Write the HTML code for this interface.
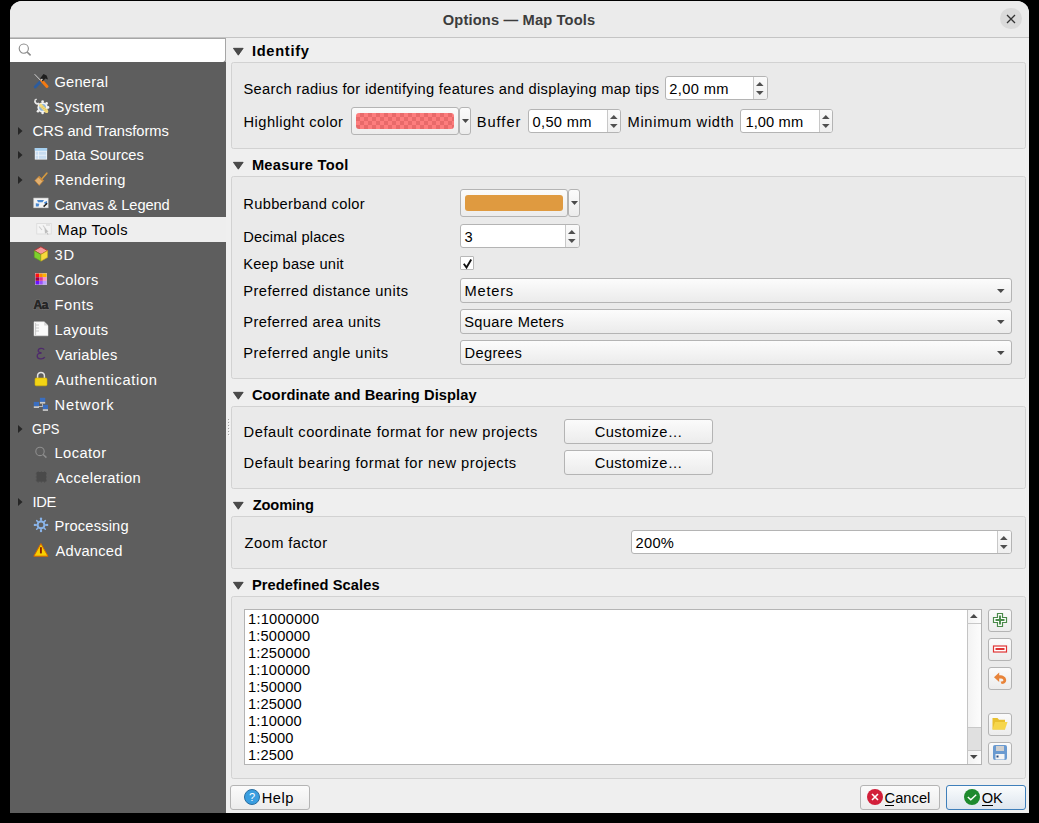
<!DOCTYPE html>
<html><head><meta charset="utf-8"><style>
*{box-sizing:border-box;margin:0;padding:0}
html,body{width:1039px;height:823px;background:#000;overflow:hidden;font-family:"Liberation Sans", sans-serif;font-size:14.67px;color:#000}
.a{position:absolute}
.t{position:absolute;white-space:pre;line-height:18px}
.win{position:absolute;left:10px;top:1px;width:1019px;height:812px;background:#efefef;border-radius:12px 12px 0 0;overflow:hidden}
.grp{position:absolute;background:#eaeaea;border:1px solid #d2d2d2;border-radius:2.5px}
.inp{position:absolute;background:#fff;border:1px solid #b4b4b4;border-radius:3px}
.btn{position:absolute;border:1px solid #b4b4b4;border-radius:3px;background:linear-gradient(#fbfbfb,#ececec)}
.combo{position:absolute;border:1px solid #b4b4b4;border-radius:3px;background:linear-gradient(#fcfcfc,#ebebeb)}
svg{position:absolute;overflow:visible}
</style></head>
<body>
<div class="win"></div>
<div class="a" style="left:10px;top:1px;width:1019px;height:36px;background:#ebebeb;border-radius:12px 12px 0 0"></div>
<div class="a" style="left:10px;top:37px;width:1019px;height:1px;background:#c4c4c4"></div>
<div class="a" style="left:1000.3px;top:8px;width:21.4px;height:21.4px;border-radius:50%;background:#dadada"></div>
<svg style="left:1007px;top:14.7px" width="8" height="8" viewBox="0 0 8 8"><path d="M0 0L8 8M8 0L0 8" stroke="#333" stroke-width="1.3"/></svg>
<div class="a" style="left:10px;top:38px;width:216px;height:775px;background:#5e5e5e"></div>
<div class="a" style="left:10px;top:38px;width:216px;height:1px;background:#a6a6a6"></div>
<div class="a" style="left:225px;top:39px;width:1px;height:23px;background:#a6a6a6"></div>
<div class="a" style="left:10px;top:39px;width:215px;height:23px;background:#fff;border-radius:0 0 2px 0"></div>
<svg style="left:18px;top:43px" width="14" height="14" viewBox="0 0 14 14"><circle cx="5.8" cy="5.6" r="4.6" fill="none" stroke="#8a8a8a" stroke-width="1.1"/><path d="M9.2 9.1L12.6 12.4" stroke="#8a8a8a" stroke-width="1.5"/></svg>
<svg style="left:33px;top:73px" width="16" height="16" viewBox="0 0 16 16"><path d="M1.6 1.2L7.6 7.4" stroke="#dcdcdc" stroke-width="0.9"/>
<path d="M2.2 14L6.8 9.3" stroke="#2c5c9e" stroke-width="2.8" stroke-linecap="round"/>
<path d="M8.6 7.6L14 13.4" stroke="#f37a12" stroke-width="3" stroke-linecap="round"/>
<path d="M7.2 5.2L10.5 1L13.6 2.6L15 6.6L12.4 5.6L9.6 8.6Z" fill="#1e1e1e"/><path d="M7.5 7L9 5.6L9.8 6.4L8.4 7.8Z" fill="#e0e0e0"/></svg>
<svg style="left:33px;top:98px" width="16" height="16" viewBox="0 0 16 16"><g fill="#f2f2f2"><circle cx="9.6" cy="9.4" r="5.2"/><circle cx="9.6" cy="3.6" r="1.3"/><circle cx="15" cy="9.4" r="1.3"/><circle cx="9.6" cy="15" r="1.3"/><circle cx="5" cy="13.2" r="1.3"/><circle cx="13.6" cy="5.4" r="1.3"/><circle cx="13.6" cy="13.4" r="1.3"/></g>
<circle cx="9.6" cy="9.4" r="3.4" fill="#86b2e0"/>
<path d="M2 2.8A2.4 2.4 0 0 0 5.2 5.6L8 8.4" stroke="#eaeaea" stroke-width="1.8" fill="none"/><path d="M1.6 2.6L3.6 1" stroke="#eaeaea" stroke-width="1.4"/>
<path d="M7.8 7.4L13.6 13.2" stroke="#f2d878" stroke-width="3.4" stroke-linecap="round"/><path d="M9 9.6L10.2 8.4M10.4 11L11.6 9.8M11.8 12.4L13 11.2" stroke="#c8a840" stroke-width="0.6"/></svg>
<svg style="left:18px;top:126.5px" width="4.5" height="8" viewBox="0 0 4.5 8"><path d="M0 0L4.5 4L0 8Z" fill="#262626"/></svg>
<svg style="left:33px;top:146px" width="16" height="16" viewBox="0 0 16 16"><rect x="1.8" y="2" width="12.3" height="11.6" fill="#eef3f8"/><rect x="1.8" y="2" width="12.3" height="2.8" fill="#a6d0f0"/>
<rect x="2.6" y="5.6" width="2.6" height="3.2" fill="#c8dcf0"/><rect x="6" y="5.6" width="7.2" height="3.2" fill="#c8dcf0"/>
<rect x="2.6" y="9.6" width="2.6" height="3.2" fill="#c8dcf0"/><rect x="6" y="9.6" width="7.2" height="3.2" fill="#c8dcf0"/></svg>
<svg style="left:18px;top:150.5px" width="4.5" height="8" viewBox="0 0 4.5 8"><path d="M0 0L4.5 4L0 8Z" fill="#262626"/></svg>
<svg style="left:33px;top:171px" width="16" height="16" viewBox="0 0 16 16"><path d="M8.6 8.2L13.8 2.2" stroke="#d49a40" stroke-width="1.7" stroke-linecap="round"/>
<path d="M1.8 9.6L6.2 5.2L10.6 9.6L6.2 14.4Z" fill="#e2b070" stroke="#c08030" stroke-width="0.7"/><path d="M5.6 5.8L9.8 10" stroke="#c88a38" stroke-width="1.4"/></svg>
<svg style="left:18px;top:175.5px" width="4.5" height="8" viewBox="0 0 4.5 8"><path d="M0 0L4.5 4L0 8Z" fill="#262626"/></svg>
<svg style="left:33px;top:196px" width="16" height="16" viewBox="0 0 16 16"><rect x="0.8" y="2.1" width="14.3" height="9.7" fill="#f4f4f4" stroke="#d8d8d8" stroke-width="0.6"/>
<path d="M4 4H11L9.5 6.2H5Z" fill="#4a88d0"/><path d="M2.8 7.2L6.4 7.8L5.5 10.6H2.8Z" fill="#4a88d0"/><path d="M11 6.2L14 5V8L12 8.2Z" fill="#4a88d0"/>
<path d="M10.6 10.6L14.2 7.2" stroke="#222" stroke-width="1.5"/></svg>
<div class="a" style="left:10px;top:217px;width:216px;height:25px;background:#eeeeee"></div>
<svg style="left:35.5px;top:221px" width="16" height="16" viewBox="0 0 16 16"><rect x="0.8" y="2.4" width="14.4" height="10.6" fill="#f4f4f4" stroke="#dadada" stroke-width="0.8"/>
<path d="M3 5.5L6 9M7 4.5L10 8.5M10 4H14" stroke="#cdcdcd" stroke-width="1.1"/><path d="M8.5 7L12.5 10.6L11 11L12.5 13.6L11.8 14L10.3 11.6L9 12.8Z" fill="#bdbdbd"/></svg>
<svg style="left:33px;top:246px" width="16" height="16" viewBox="0 0 16 16"><path d="M7.9 0.8L14.6 4.6L7.9 8.4L1.2 4.6Z" fill="#f49a9a" stroke="#b02c2c" stroke-width="0.9" stroke-linejoin="round"/>
<path d="M1.2 4.6L7.9 8.4V15.2L1.2 11.4Z" fill="#7ed02c" stroke="#5a9020" stroke-width="0.6"/>
<path d="M14.6 4.6L7.9 8.4V15.2L14.6 11.4Z" fill="#f6da3c" stroke="#c0a020" stroke-width="0.6"/></svg>
<svg style="left:33px;top:271px" width="16" height="16" viewBox="0 0 16 16"><rect x="2" y="2" width="12" height="12" fill="#c8c0c8"/>
<rect x="2.5" y="2.5" width="3.5" height="3.5" fill="#ff1010"/><rect x="6.25" y="2.5" width="3.5" height="3.5" fill="#ff8c00"/><rect x="10" y="2.5" width="3.5" height="3.5" fill="#ffb400"/>
<rect x="2.5" y="6.25" width="3.5" height="3.5" fill="#a00040"/><rect x="6.25" y="6.25" width="3.5" height="3.5" fill="#e0309a"/><rect x="10" y="6.25" width="3.5" height="3.5" fill="#ff90c8"/>
<rect x="2.5" y="10" width="3.5" height="3.5" fill="#6a10ff"/><rect x="6.25" y="10" width="3.5" height="3.5" fill="#9a50ff"/><rect x="10" y="10" width="3.5" height="3.5" fill="#b8a0ff"/></svg>
<svg style="left:33px;top:296px" width="16" height="16" viewBox="0 0 16 16"><text x="0.6" y="12.6" font-family="Liberation Sans" font-weight="bold" font-size="12" letter-spacing="-0.6" fill="#262626" stroke="#8c8c8c" stroke-width="1.2" paint-order="stroke">Aa</text><text x="0.6" y="12.6" font-family="Liberation Sans" font-weight="bold" font-size="12" letter-spacing="-0.6" fill="#262626" stroke="#262626" stroke-width="0.5">Aa</text></svg>
<svg style="left:33px;top:321px" width="16" height="16" viewBox="0 0 16 16"><path d="M1 0.8H11.2L15 4.6V14.8H1Z" fill="#fbfbfb" stroke="#e2e2e2" stroke-width="0.5"/><path d="M11.2 0.8V4.6H15Z" fill="#d6d6d6"/><path d="M2.6 2V14M2.6 4H6M2.6 7H6M2.6 10H6" stroke="#c4c4c4" stroke-width="0.9"/></svg>
<svg style="left:33px;top:346px" width="16" height="16" viewBox="0 0 16 16"><path d="M11.2 3.6C10.4 2 5.4 1.6 5.2 4.6C5.1 6.2 7 6.8 8.6 7C6 7 4 8 4.2 10.3C4.6 13.6 10.2 13.6 11.8 11.2" fill="none" stroke="#4e2a6c" stroke-width="1.3"/></svg>
<svg style="left:33px;top:371px" width="16" height="16" viewBox="0 0 16 16"><path d="M4.6 7.6V4.8A3.3 3.3 0 0 1 11.4 4.8V7.6" fill="none" stroke="#e2e2e2" stroke-width="1.5"/><rect x="2" y="7" width="12" height="7.8" rx="1.3" fill="#f2d414" stroke="#d8b400" stroke-width="0.6"/></svg>
<svg style="left:33px;top:396px" width="16" height="16" viewBox="0 0 16 16"><path d="M5 10.5H10.5M9.5 7.6V10.5" stroke="#d0d0d0" stroke-width="0.8"/>
<rect x="0.8" y="5.9" width="5.2" height="4.4" fill="#3a6ec0"/><rect x="0.8" y="10.3" width="5.2" height="1.7" fill="#cacaca"/>
<rect x="6.9" y="1.8" width="5.3" height="4.1" fill="#3a6ec0"/><rect x="6.9" y="5.9" width="5.3" height="1.7" fill="#cacaca"/>
<rect x="9.8" y="8.8" width="5.2" height="4.4" fill="#3a6ec0"/><rect x="9.8" y="13.2" width="5.2" height="1.7" fill="#cacaca"/></svg>
<svg style="left:18px;top:424.5px" width="4.5" height="8" viewBox="0 0 4.5 8"><path d="M0 0L4.5 4L0 8Z" fill="#262626"/></svg>
<svg style="left:33px;top:444px" width="16" height="16" viewBox="0 0 16 16"><circle cx="7" cy="7.4" r="4.2" fill="none" stroke="#8e8e8e" stroke-width="1.1"/><path d="M10.1 10.5L13.4 13.6" stroke="#8e8e8e" stroke-width="1.5"/></svg>
<svg style="left:33px;top:469px" width="16" height="16" viewBox="0 0 16 16"><path d="M5.2 2V14M8.4 2V14M11.6 2V14M2.6 4.8H14M2.6 8H14M2.6 11.2H14" stroke="#525252" stroke-width="0.8"/><rect x="3.6" y="3" width="9.6" height="9.6" fill="#4a4a4a"/></svg>
<svg style="left:18px;top:497.5px" width="4.5" height="8" viewBox="0 0 4.5 8"><path d="M0 0L4.5 4L0 8Z" fill="#262626"/></svg>
<svg style="left:33px;top:517px" width="16" height="16" viewBox="0 0 16 16"><g stroke="#8ab4e8" stroke-width="1.5" stroke-linecap="round"><path d="M8 1.8V14M1.9 7.9H14.1M3.7 3.6L12.3 12.2M12.3 3.6L3.7 12.2"/></g><g fill="#8ab4e8"><circle cx="8" cy="1.8" r="1.2"/><circle cx="8" cy="14" r="1.2"/><circle cx="1.9" cy="7.9" r="1.2"/><circle cx="14.1" cy="7.9" r="1.2"/></g><circle cx="8" cy="7.9" r="3.4" fill="#5e5e5e" stroke="#8ab4e8" stroke-width="2"/></svg>
<svg style="left:33px;top:542px" width="16" height="16" viewBox="0 0 16 16"><path d="M7.9 1.6L15 14.2H0.8Z" fill="#f8d000" stroke="#d86800" stroke-width="1" stroke-linejoin="round"/><path d="M7.9 5.2V11.4" stroke="#8a2000" stroke-width="1.9"/></svg>
<div class="a" style="left:228px;top:419px;width:1px;height:1px;background:#a4a4a4"></div>
<div class="a" style="left:229px;top:420px;width:1px;height:1px;background:#fbfbfb"></div>
<div class="a" style="left:228px;top:422px;width:1px;height:1px;background:#a4a4a4"></div>
<div class="a" style="left:229px;top:423px;width:1px;height:1px;background:#fbfbfb"></div>
<div class="a" style="left:228px;top:425px;width:1px;height:1px;background:#a4a4a4"></div>
<div class="a" style="left:229px;top:426px;width:1px;height:1px;background:#fbfbfb"></div>
<div class="a" style="left:228px;top:428px;width:1px;height:1px;background:#a4a4a4"></div>
<div class="a" style="left:229px;top:429px;width:1px;height:1px;background:#fbfbfb"></div>
<div class="a" style="left:228px;top:431px;width:1px;height:1px;background:#a4a4a4"></div>
<div class="a" style="left:229px;top:432px;width:1px;height:1px;background:#fbfbfb"></div>
<div class="a" style="left:228px;top:434px;width:1px;height:1px;background:#a4a4a4"></div>
<div class="a" style="left:229px;top:435px;width:1px;height:1px;background:#fbfbfb"></div>
<svg style="left:232.6px;top:47.8px" width="10.6" height="7.5" viewBox="0 0 10.6 7.5"><path d="M0.4 0.3H10.2L5.3 7.2Z" fill="#4a4a4a" stroke="#2e2e2e" stroke-width="0.7" stroke-linejoin="round"/></svg>
<svg style="left:232.6px;top:161.8px" width="10.6" height="7.5" viewBox="0 0 10.6 7.5"><path d="M0.4 0.3H10.2L5.3 7.2Z" fill="#4a4a4a" stroke="#2e2e2e" stroke-width="0.7" stroke-linejoin="round"/></svg>
<svg style="left:232.6px;top:391.8px" width="10.6" height="7.5" viewBox="0 0 10.6 7.5"><path d="M0.4 0.3H10.2L5.3 7.2Z" fill="#4a4a4a" stroke="#2e2e2e" stroke-width="0.7" stroke-linejoin="round"/></svg>
<svg style="left:232.6px;top:501.8px" width="10.6" height="7.5" viewBox="0 0 10.6 7.5"><path d="M0.4 0.3H10.2L5.3 7.2Z" fill="#4a4a4a" stroke="#2e2e2e" stroke-width="0.7" stroke-linejoin="round"/></svg>
<svg style="left:232.6px;top:581.8px" width="10.6" height="7.5" viewBox="0 0 10.6 7.5"><path d="M0.4 0.3H10.2L5.3 7.2Z" fill="#4a4a4a" stroke="#2e2e2e" stroke-width="0.7" stroke-linejoin="round"/></svg>
<div class="grp" style="left:231px;top:62px;width:795px;height:87px;"></div>
<div class="grp" style="left:231px;top:176px;width:795px;height:203px;"></div>
<div class="grp" style="left:231px;top:406px;width:795px;height:83px;"></div>
<div class="grp" style="left:231px;top:516px;width:795px;height:53px;"></div>
<div class="grp" style="left:231px;top:596px;width:795px;height:183px;"></div>
<div class="inp" style="left:665px;top:76px;width:103px;height:24px;"></div>
<div class="a" style="left:753px;top:77px;width:14px;height:22px;background:linear-gradient(#fafafa,#efefef);border-left:1px solid #c8c8c8;border-radius:0 2px 2px 0"></div>
<svg style="left:756.2px;top:81.8px" width="7.6" height="4" viewBox="0 0 7.6 4"><path d="M0 4H7.6L3.8 0Z" fill="#505050"/></svg>
<svg style="left:756.2px;top:90.8px" width="7.6" height="4" viewBox="0 0 7.6 4"><path d="M0 0H7.6L3.8 4Z" fill="#505050"/></svg>
<div class="btn" style="left:351px;top:107px;width:108px;height:28px;"></div>
<div class="a" style="left:356px;top:113px;width:98px;height:16px;border-radius:3px;background:repeating-conic-gradient(#e86a6a 0 25%,#fd7d7d 0 50%) 0 0/8px 8px"></div>
<div class="btn" style="left:459px;top:107px;width:12px;height:28px;"></div>
<svg style="left:461.5px;top:119px" width="7" height="4" viewBox="0 0 7 4"><path d="M0 0H7L3.5 4Z" fill="#4a4a4a"/></svg>
<div class="inp" style="left:528px;top:109px;width:93px;height:24px;"></div>
<div class="a" style="left:607px;top:110px;width:13px;height:22px;background:linear-gradient(#fafafa,#efefef);border-left:1px solid #c8c8c8;border-radius:0 2px 2px 0"></div>
<svg style="left:609.7px;top:114.8px" width="7.6" height="4" viewBox="0 0 7.6 4"><path d="M0 4H7.6L3.8 0Z" fill="#505050"/></svg>
<svg style="left:609.7px;top:123.8px" width="7.6" height="4" viewBox="0 0 7.6 4"><path d="M0 0H7.6L3.8 4Z" fill="#505050"/></svg>
<div class="inp" style="left:740px;top:109px;width:93px;height:24px;"></div>
<div class="a" style="left:819px;top:110px;width:13px;height:22px;background:linear-gradient(#fafafa,#efefef);border-left:1px solid #c8c8c8;border-radius:0 2px 2px 0"></div>
<svg style="left:821.7px;top:114.8px" width="7.6" height="4" viewBox="0 0 7.6 4"><path d="M0 4H7.6L3.8 0Z" fill="#505050"/></svg>
<svg style="left:821.7px;top:123.8px" width="7.6" height="4" viewBox="0 0 7.6 4"><path d="M0 0H7.6L3.8 4Z" fill="#505050"/></svg>
<div class="btn" style="left:460px;top:189px;width:108px;height:28px;"></div>
<div class="a" style="left:465px;top:195px;width:98px;height:16px;border-radius:3px;background:#df9a40"></div>
<div class="btn" style="left:568px;top:189px;width:12px;height:28px;"></div>
<svg style="left:570.5px;top:201px" width="7" height="4" viewBox="0 0 7 4"><path d="M0 0H7L3.5 4Z" fill="#4a4a4a"/></svg>
<div class="inp" style="left:460px;top:224px;width:120px;height:24px;"></div>
<div class="a" style="left:565px;top:225px;width:14px;height:22px;background:linear-gradient(#fafafa,#efefef);border-left:1px solid #c8c8c8;border-radius:0 2px 2px 0"></div>
<svg style="left:568.2px;top:229.8px" width="7.6" height="4" viewBox="0 0 7.6 4"><path d="M0 4H7.6L3.8 0Z" fill="#505050"/></svg>
<svg style="left:568.2px;top:238.8px" width="7.6" height="4" viewBox="0 0 7.6 4"><path d="M0 0H7.6L3.8 4Z" fill="#505050"/></svg>
<div class="a" style="left:460px;top:256px;width:14px;height:14px;background:#fff;border:1px solid #b8b8b8;border-radius:1px"></div>
<svg style="left:462.5px;top:258.5px" width="9" height="9.5" viewBox="0 0 9 9.5"><path d="M0.8 4.8L3.5 8.5L8.2 0.5" fill="none" stroke="#111" stroke-width="1.9"/></svg>
<div class="combo" style="left:460px;top:278px;width:552px;height:25px;"></div>
<svg style="left:997.2px;top:288.5px" width="7.6" height="4" viewBox="0 0 7.6 4"><path d="M0 0H7.6L3.8 4Z" fill="#4a4a4a"/></svg>
<div class="combo" style="left:460px;top:309px;width:552px;height:25px;"></div>
<svg style="left:997.2px;top:319.5px" width="7.6" height="4" viewBox="0 0 7.6 4"><path d="M0 0H7.6L3.8 4Z" fill="#4a4a4a"/></svg>
<div class="combo" style="left:460px;top:340px;width:552px;height:25px;"></div>
<svg style="left:997.2px;top:350.5px" width="7.6" height="4" viewBox="0 0 7.6 4"><path d="M0 0H7.6L3.8 4Z" fill="#4a4a4a"/></svg>
<div class="btn" style="left:564px;top:419px;width:149px;height:25px;"></div>
<div class="btn" style="left:564px;top:450px;width:149px;height:25px;"></div>
<div class="inp" style="left:631px;top:530px;width:381px;height:24px;"></div>
<div class="a" style="left:997px;top:531px;width:14px;height:22px;background:linear-gradient(#fafafa,#efefef);border-left:1px solid #c8c8c8;border-radius:0 2px 2px 0"></div>
<svg style="left:1000.2px;top:535.8px" width="7.6" height="4" viewBox="0 0 7.6 4"><path d="M0 4H7.6L3.8 0Z" fill="#505050"/></svg>
<svg style="left:1000.2px;top:544.8px" width="7.6" height="4" viewBox="0 0 7.6 4"><path d="M0 0H7.6L3.8 4Z" fill="#505050"/></svg>
<div class="a" style="left:244px;top:609px;width:738px;height:156px;background:#fff;border:1px solid #b4b4b4"></div>
<div class="a" style="left:967px;top:610px;width:14px;height:154px;background:linear-gradient(90deg,#f3f3f3,#fcfcfc);border-left:1px solid #c4c4c4"></div>
<div class="a" style="left:967px;top:623px;width:14px;height:1px;background:#c8c8c8"></div>
<div class="a" style="left:968px;top:727px;width:13px;height:24px;background:#e0e0e0;border-top:1px solid #c8c8c8;border-bottom:1px solid #c8c8c8"></div>
<svg style="left:970.2px;top:614px" width="7.6" height="4" viewBox="0 0 7.6 4"><path d="M0 4H7.6L3.8 0Z" fill="#484848"/></svg>
<svg style="left:970.2px;top:755px" width="7.6" height="4" viewBox="0 0 7.6 4"><path d="M0 0H7.6L3.8 4Z" fill="#484848"/></svg>
<div class="btn" style="left:988px;top:609px;width:24px;height:23px;"></div>
<div class="btn" style="left:988px;top:638px;width:24px;height:23px;"></div>
<div class="btn" style="left:988px;top:667px;width:24px;height:23px;"></div>
<div class="btn" style="left:988px;top:713px;width:24px;height:23px;"></div>
<div class="btn" style="left:988px;top:742px;width:24px;height:23px;"></div>
<svg style="left:992px;top:612px" width="16" height="16" viewBox="0 0 16 16"><path d="M5.5 1.5H10.5V5.5H14.5V10.5H10.5V14.5H5.5V10.5H1.5V5.5H5.5Z" fill="#fff" stroke="#4a8a4a" stroke-width="1.2"/><path d="M8 3.5V12.5M3.5 8H12.5" stroke="#4a8a4a" stroke-width="1.9"/></svg>
<svg style="left:992px;top:641px" width="16" height="16" viewBox="0 0 16 16"><rect x="1.5" y="5" width="13" height="6" fill="#fff" stroke="#e03535" stroke-width="1.2"/><path d="M3.5 8H12.5" stroke="#e03535" stroke-width="2"/></svg>
<svg style="left:992px;top:670px" width="16" height="16" viewBox="0 0 16 16"><path d="M2 7.2L7.2 2.4V5.2C11.6 5.2 14.2 7.2 14.2 10.2C14.2 12.6 12.4 14 9.6 14L8.6 11.6C10.6 11.6 11.4 11 11.4 10.2C11.4 8.8 9.8 8.4 7.2 8.4V12Z" fill="#e8843a"/></svg>
<svg style="left:992px;top:717px" width="16" height="14" viewBox="0 0 16 14"><path d="M0.5 1H5.5L7 2.8H13V12.5H0.5Z" fill="#e8c030"/><path d="M3 5H15.5L13 12.5H0.5Z" fill="#f6d64c"/></svg>
<svg style="left:993px;top:745px" width="14" height="15" viewBox="0 0 14 15"><rect x="0" y="0" width="14" height="15" rx="2" fill="#6a9ad0"/><rect x="3" y="1" width="8" height="5" fill="#d0d0d0"/><rect x="2.5" y="9" width="9" height="5.5" fill="#f4f4f4"/><rect x="3.5" y="10.5" width="2" height="2" fill="#2a4a7a"/></svg>
<div class="btn" style="left:230px;top:785px;width:80px;height:25px;"></div>
<div class="a" style="left:244px;top:789px;width:16px;height:16px;border-radius:50%;background:#3a9ee0;border:1px solid #2a6ea0"></div>
<svg style="left:248px;top:791px" width="8" height="12" viewBox="0 0 8 12"><text x="4" y="10" text-anchor="middle" font-family="Liberation Sans" font-size="11" fill="#fff">?</text></svg>
<div class="btn" style="left:860px;top:785px;width:80px;height:25px;"></div>
<div class="a" style="left:867px;top:789px;width:16px;height:16px;border-radius:50%;background:#d21f3a"></div>
<svg style="left:871px;top:793px" width="8" height="8" viewBox="0 0 8 8"><path d="M1 1L7 7M7 1L1 7" stroke="#fff" stroke-width="1.6"/></svg>
<div class="a" style="left:885px;top:805px;width:9px;height:1px;background:#000"></div>
<div class="btn" style="left:946px;top:785px;width:80px;height:25px;border-color:#3f7fba;background:linear-gradient(#fafcfd,#dde5ee)"></div>
<div class="a" style="left:964px;top:789px;width:16px;height:16px;border-radius:50%;background:#1e8a2e"></div>
<svg style="left:966.5px;top:794px" width="10" height="7" viewBox="0 0 10 7"><path d="M0.8 3L3.8 5.8L9.2 0.8" fill="none" stroke="#fff" stroke-width="1.4"/></svg>
<div class="a" style="left:982px;top:805px;width:11px;height:1px;background:#000"></div>
<div class="t" style="left:442.80px;top:11px;letter-spacing:0.156px;font-weight:bold;color:#3c3c3c">Options — Map Tools</div>
<div class="t" style="left:54.50px;top:73px;letter-spacing:0.217px;font-weight:normal;color:#ffffff">General</div>
<div class="t" style="left:54.50px;top:98px;letter-spacing:0.220px;font-weight:normal;color:#ffffff">System</div>
<div class="t" style="left:32.60px;top:122px;letter-spacing:-0.041px;font-weight:normal;color:#ffffff">CRS and Transforms</div>
<div class="t" style="left:54.50px;top:146px;letter-spacing:0.045px;font-weight:normal;color:#ffffff">Data Sources</div>
<div class="t" style="left:54.50px;top:171px;letter-spacing:0.412px;font-weight:normal;color:#ffffff">Rendering</div>
<div class="t" style="left:54.50px;top:196px;letter-spacing:-0.093px;font-weight:normal;color:#ffffff">Canvas &amp; Legend</div>
<div class="t" style="left:57.60px;top:221px;letter-spacing:0.425px;font-weight:normal;color:#000">Map Tools</div>
<div class="t" style="left:54.50px;top:246px;letter-spacing:0.900px;font-weight:normal;color:#ffffff">3D</div>
<div class="t" style="left:54.50px;top:271px;letter-spacing:0.280px;font-weight:normal;color:#ffffff">Colors</div>
<div class="t" style="left:54.50px;top:296px;letter-spacing:0.550px;font-weight:normal;color:#ffffff">Fonts</div>
<div class="t" style="left:54.50px;top:321px;letter-spacing:0.383px;font-weight:normal;color:#ffffff">Layouts</div>
<div class="t" style="left:55.50px;top:346px;letter-spacing:0.213px;font-weight:normal;color:#ffffff">Variables</div>
<div class="t" style="left:55.30px;top:371px;letter-spacing:0.677px;font-weight:normal;color:#ffffff">Authentication</div>
<div class="t" style="left:54.50px;top:396px;letter-spacing:0.900px;font-weight:normal;color:#ffffff">Network</div>
<div class="t" style="left:32.40px;top:420px;transform:scaleX(0.883);transform-origin:1px 0;font-weight:normal;color:#ffffff">GPS</div>
<div class="t" style="left:54.50px;top:444px;letter-spacing:0.450px;font-weight:normal;color:#ffffff">Locator</div>
<div class="t" style="left:55.50px;top:469px;letter-spacing:0.418px;font-weight:normal;color:#ffffff">Acceleration</div>
<div class="t" style="left:32.40px;top:493px;letter-spacing:-0.250px;font-weight:normal;color:#ffffff">IDE</div>
<div class="t" style="left:54.50px;top:517px;letter-spacing:0.178px;font-weight:normal;color:#ffffff">Processing</div>
<div class="t" style="left:55.50px;top:542px;letter-spacing:0.229px;font-weight:normal;color:#ffffff">Advanced</div>
<div class="t" style="left:251.90px;top:42px;letter-spacing:0.714px;font-weight:bold;color:#000">Identify</div>
<div class="t" style="left:243.50px;top:80px;letter-spacing:0.320px;font-weight:normal;color:#000">Search radius for identifying features and displaying map tips</div>
<div class="t" style="left:669.20px;top:80px;letter-spacing:0.383px;font-weight:normal;color:#000">2,00 mm</div>
<div class="t" style="left:243.50px;top:113px;letter-spacing:0.471px;font-weight:normal;color:#000">Highlight color</div>
<div class="t" style="left:476.70px;top:113px;letter-spacing:0.980px;font-weight:normal;color:#000">Buffer</div>
<div class="t" style="left:532.50px;top:113px;letter-spacing:0.333px;font-weight:normal;color:#000">0,50 mm</div>
<div class="t" style="left:627.50px;top:113px;letter-spacing:0.700px;font-weight:normal;color:#000">Minimum width</div>
<div class="t" style="left:745.40px;top:113px;letter-spacing:0.117px;font-weight:normal;color:#000">1,00 mm</div>
<div class="t" style="left:251.90px;top:156px;letter-spacing:0.273px;font-weight:bold;color:#000">Measure Tool</div>
<div class="t" style="left:243.30px;top:195px;letter-spacing:0.320px;font-weight:normal;color:#000">Rubberband color</div>
<div class="t" style="left:243.30px;top:228px;letter-spacing:0.146px;font-weight:normal;color:#000">Decimal places</div>
<div class="t" style="left:464.60px;top:228px;letter-spacing:0.000px;font-weight:normal;color:#000">3</div>
<div class="t" style="left:243.30px;top:255px;letter-spacing:0.200px;font-weight:normal;color:#000">Keep base unit</div>
<div class="t" style="left:243.30px;top:282px;letter-spacing:0.430px;font-weight:normal;color:#000">Preferred distance units</div>
<div class="t" style="left:464.60px;top:282px;letter-spacing:0.760px;font-weight:normal;color:#000">Meters</div>
<div class="t" style="left:243.30px;top:313px;letter-spacing:0.405px;font-weight:normal;color:#000">Preferred area units</div>
<div class="t" style="left:464.30px;top:313px;letter-spacing:0.292px;font-weight:normal;color:#000">Square Meters</div>
<div class="t" style="left:243.30px;top:344px;letter-spacing:0.435px;font-weight:normal;color:#000">Preferred angle units</div>
<div class="t" style="left:464.60px;top:344px;letter-spacing:0.300px;font-weight:normal;color:#000">Degrees</div>
<div class="t" style="left:251.90px;top:386px;letter-spacing:0.083px;font-weight:bold;color:#000">Coordinate and Bearing Display</div>
<div class="t" style="left:243.60px;top:423px;letter-spacing:0.527px;font-weight:normal;color:#000">Default coordinate format for new projects</div>
<div class="t" style="left:594.80px;top:423px;letter-spacing:0.411px;font-weight:normal;color:#000">Customize…</div>
<div class="t" style="left:243.60px;top:454px;letter-spacing:0.526px;font-weight:normal;color:#000">Default bearing format for new projects</div>
<div class="t" style="left:594.80px;top:454px;letter-spacing:0.411px;font-weight:normal;color:#000">Customize…</div>
<div class="t" style="left:252.70px;top:496px;letter-spacing:-0.117px;font-weight:bold;color:#000">Zooming</div>
<div class="t" style="left:244.60px;top:534px;letter-spacing:0.430px;font-weight:normal;color:#000">Zoom factor</div>
<div class="t" style="left:635.60px;top:534px;letter-spacing:0.267px;font-weight:normal;color:#000">200%</div>
<div class="t" style="left:251.90px;top:576px;letter-spacing:0.094px;font-weight:bold;color:#000">Predefined Scales</div>
<div class="t" style="left:248.00px;top:610px;letter-spacing:0.225px;font-weight:normal;color:#000">1:1000000</div>
<div class="t" style="left:248.00px;top:627px;letter-spacing:0.157px;font-weight:normal;color:#000">1:500000</div>
<div class="t" style="left:248.00px;top:644px;letter-spacing:0.157px;font-weight:normal;color:#000">1:250000</div>
<div class="t" style="left:248.00px;top:661px;letter-spacing:0.157px;font-weight:normal;color:#000">1:100000</div>
<div class="t" style="left:248.00px;top:678px;letter-spacing:0.117px;font-weight:normal;color:#000">1:50000</div>
<div class="t" style="left:248.00px;top:695px;letter-spacing:0.117px;font-weight:normal;color:#000">1:25000</div>
<div class="t" style="left:248.00px;top:712px;letter-spacing:0.117px;font-weight:normal;color:#000">1:10000</div>
<div class="t" style="left:248.00px;top:729px;letter-spacing:0.100px;font-weight:normal;color:#000">1:5000</div>
<div class="t" style="left:248.00px;top:746px;letter-spacing:0.100px;font-weight:normal;color:#000">1:2500</div>
<div class="t" style="left:261.70px;top:789px;letter-spacing:0.533px;font-weight:normal;color:#000">Help</div>
<div class="t" style="left:884.60px;top:789px;letter-spacing:0.020px;font-weight:normal;color:#000">Cancel</div>
<div class="t" style="left:981.70px;top:789px;letter-spacing:-0.200px;font-weight:normal;color:#000">OK</div>
</body></html>
